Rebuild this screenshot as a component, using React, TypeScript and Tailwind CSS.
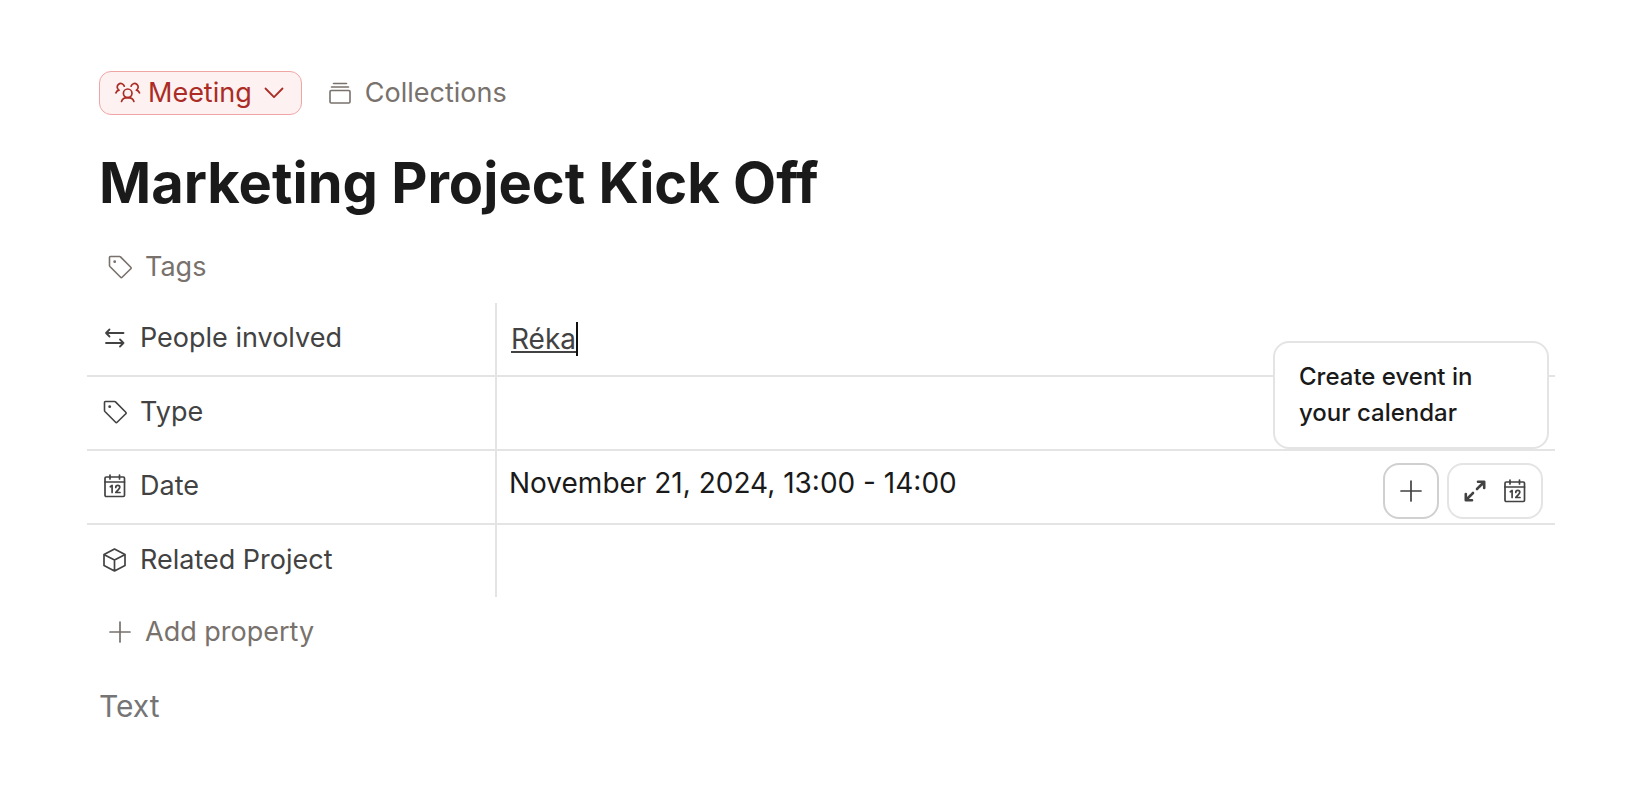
import type { ReactNode } from "react";

type IconProps = { className?: string };

const PROPERTY_ROWS = [
  { id: "people", label: "People involved", icon: <RelationIcon />, value: <PeopleValue /> },
  { id: "type", label: "Type", icon: <TagIcon />, value: null },
  { id: "date", label: "Date", icon: <CalendarIcon />, value: <DateValue /> },
  { id: "project", label: "Related Project", icon: <CubeIcon />, value: null },
];

export default function App() {
  return (
    <main className="min-h-screen bg-white pt-[71px] pr-[82px] pb-16 pl-[87px] font-['Inter',sans-serif] text-[27px] leading-10 text-[#1a1a1a]">
      <div className="flex items-center gap-[26px] px-3">
        <button
          type="button"
          className="flex h-11 items-center rounded-xl border border-[#f0a5a5] bg-[#fdf2f1] px-[15px] text-[#ab2c25]"
        >
          <PeopleIcon />
          <span className="ml-[7px]">Meeting</span>
          <ChevronIcon className="ml-[10px]" />
        </button>
        <button type="button" className="flex items-center gap-[13px] text-[#78716c]">
          <CollectionsIcon />
          Collections
        </button>
      </div>

      <h1 className="mt-9 px-3 text-[56px] leading-16 font-bold text-[#1a1a1a]">
        Marketing Project Kick Off
      </h1>

      <GhostButton className="mt-8" icon={<TagIcon />} label="Tags" />

      <table className="mt-4 w-full border-collapse">
        <tbody className="divide-y-2 divide-[#e4e4e4]">
          {PROPERTY_ROWS.map((row) => (
            <PropertyRow key={row.id} icon={row.icon} label={row.label}>
              {row.value}
            </PropertyRow>
          ))}
        </tbody>
      </table>

      <GhostButton className="mt-[15px]" icon={<PlusIcon />} label="Add property" />

      <input
        type="text"
        aria-label="Text"
        placeholder="Text"
        className="mt-8 block h-11 w-full px-3 text-[30px] outline-none placeholder:text-[#757575]"
      />
    </main>
  );
}

function PropertyRow({
  icon,
  label,
  children,
}: {
  icon: ReactNode;
  label: string;
  children: ReactNode;
}) {
  return (
    <tr>
      <th scope="row" className="w-[409px] border-r-2 border-[#e4e4e4] p-0 text-left font-normal">
        <div className="flex h-18 items-center gap-[13px] pb-[3px] pl-4 text-[#424242]">
          {icon}
          {label}
        </div>
      </th>
      <td className="p-0 text-[28px]">
        <div className="flex h-18 items-center justify-between px-3">{children}</div>
      </td>
    </tr>
  );
}

function PeopleValue() {
  return (
    <div className="flex items-center pl-0.5">
      <input
        type="text"
        aria-label="People involved"
        defaultValue="Réka"
        className="field-sizing-content text-[#424242] underline outline-none"
      />
      <span className="h-[34px] w-[2px] bg-[#111111]" />
    </div>
  );
}

function DateValue() {
  return (
    <>
      <span className="pb-2">November 21, 2024, 13:00 - 14:00</span>
      <div className="relative mt-2 flex gap-2">
        <button
          type="button"
          aria-label="Create event"
          aria-describedby="create-event-tip"
          className="flex size-14 items-center justify-center rounded-2xl border-2 border-[#d0d0d0] bg-white text-[#424242]"
        >
          <PlusIcon />
        </button>
        <div className="flex h-14 w-24 items-center justify-center gap-4 rounded-2xl border-2 border-[#e4e4e4] bg-white text-[#424242]">
          <button type="button" aria-label="Expand">
            <ExpandIcon />
          </button>
          <button type="button" aria-label="Open calendar">
            <CalendarIcon />
          </button>
        </div>
        <div
          id="create-event-tip"
          role="tooltip"
          className="absolute -right-[6px] bottom-full mb-[14px] w-[276px] rounded-2xl border-2 border-[#e4e4e4] bg-white px-6 py-4 text-2xl leading-9 font-medium text-[#1a1a1a]"
        >
          Create event in your calendar
        </div>
      </div>
    </>
  );
}

function GhostButton({
  icon,
  label,
  className,
}: {
  icon: ReactNode;
  label: string;
  className: string;
}) {
  return (
    <button type="button" className={`${className} flex items-center gap-[13px] pl-[21px] text-[#78716c]`}>
      {icon}
      {label}
    </button>
  );
}

function Icon({ className = "", width = 2, children }: IconProps & { width?: number; children: ReactNode }) {
  return (
    <svg
      viewBox="0 0 24 24"
      className={`size-6 shrink-0 ${className}`}
      fill="none"
      stroke="currentColor"
      strokeWidth={width}
      strokeLinecap="round"
      strokeLinejoin="round"
      aria-hidden="true"
    >
      {children}
    </svg>
  );
}

function PeopleIcon() {
  return (
    <svg
      viewBox="0 0 26 24"
      className="h-6 w-[26px] shrink-0"
      fill="none"
      stroke="currentColor"
      strokeWidth="1.7"
      strokeLinecap="round"
      strokeLinejoin="round"
      aria-hidden="true"
    >
      <circle cx="12.700" cy="12.300" r="4.300" />
      <path d="M6.500 20.400c.7-2.300 3.100-3.800 6.200-3.800s5.500 1.500 6.200 3.800" />
      <path d="M9.300 5.200A3.600 3.600 0 1 0 4 9.200C2.700 9.500 1.500 10.400.9 11.800" />
      <path d="M16.100 5.200a3.600 3.600 0 1 1 5.300 4c1.300.3 2.500 1.200 3.100 2.600" />
    </svg>
  );
}

function ChevronIcon({ className }: IconProps) {
  return (
    <Icon className={className} width={1.8}>
      <path d="m3.500 7.500 8.500 8.700 8.500-8.700" />
    </Icon>
  );
}

function CollectionsIcon() {
  return (
    <Icon width={1.6}>
      <path d="M5.500 2.500h13M3.500 6h17" />
      <rect x="2" y="9.500" width="20" height="12.500" rx="1.200" />
    </Icon>
  );
}

function TagIcon() {
  return (
    <Icon width={1.6}>
      <path d="M1.500 2.300v8.200a1.500 1.500 0 0 0 .4 1l10.700 10.800a1 1 0 0 0 1.500 0l8.700-8.500a1 1 0 0 0 0-1.500L12.500 1.900a1.500 1.500 0 0 0-1-.4H2.300a.8.8 0 0 0-.8.8Z" />
      <circle cx="6.700" cy="6.700" r="1.400" fill="currentColor" stroke="none" />
    </Icon>
  );
}

function RelationIcon() {
  return (
    <Icon width={1.8}>
      <path d="M20.500 7H3m3.500-3.500L3 7l3.500 3.500M3 17h17.500M17 13.500l3.500 3.500-3.500 3.500" />
    </Icon>
  );
}

function CalendarIcon() {
  return (
    <Icon width={1.7}>
      <rect x="2" y="3" width="19.500" height="19.500" rx="1.200" />
      <path d="M2 8h19.500M7 1v4M16.500 1v4" />
      <path d="m7.300 12.800 1.800-1.300v7M12.800 13.400c0-1.200.8-2 2-2s2 .8 2 1.900c0 1.700-2.200 2.700-4 5.200h4.200" />
    </Icon>
  );
}

function CubeIcon() {
  return (
    <Icon width={1.7}>
      <path d="M11.500 1 22 6.500v11L11.500 23 1 17.500v-11L11.500 1ZM1.300 6.700l10.200 5.300 10.200-5.300M11.500 12v10.500" />
    </Icon>
  );
}

function PlusIcon() {
  return (
    <Icon width={1.7}>
      <path d="M12 2v20M2 12h20" />
    </Icon>
  );
}

function ExpandIcon() {
  return (
    <Icon width={2.6}>
      <path d="m14 10 1.800-1.800M10 14l-1.800 1.800" />
      <path d="m16.500 7.500 3.500-3.500M15 2.800h6.200V9M7.500 16.500 4 20M2.800 15v6.200H9" />
    </Icon>
  );
}
